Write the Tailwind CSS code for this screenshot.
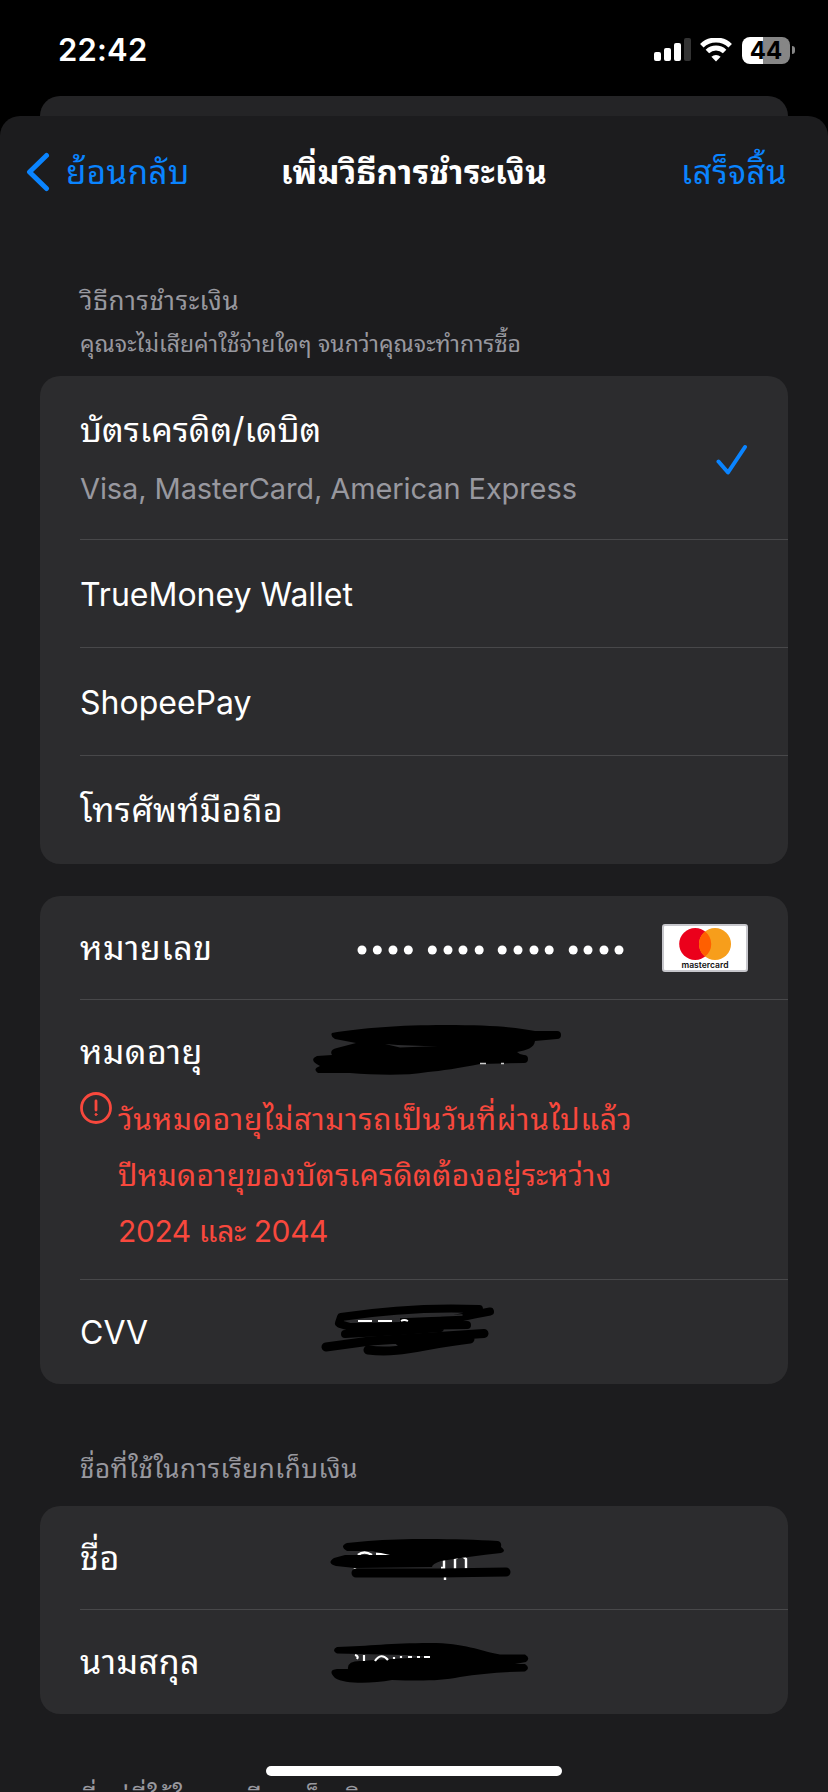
<!DOCTYPE html>
<html lang="th">
<head>
    <meta charset="UTF-8">
    <meta name="viewport" content="width=device-width, initial-scale=1.0">
    <title>เพิ่มวิธีการชำระเงิน</title>
    <script src="https://cdn.jsdelivr.net/npm/@tailwindcss/browser@4"></script>
    <style>
        body {
            font-family: 'Inter', 'Noto Sans Thai Looped', 'Noto Looped Thai', 'Loma', 'Garuda', 'Waree', 'Sarabun', 'Noto Sans Thai', sans-serif;
        }
    </style>
</head>
<body class="bg-black text-white w-[828px] h-[1792px] overflow-hidden relative">

    <!-- Status bar -->
    <header class="h-24 pt-1 pl-[58px] pr-[33px] flex items-center justify-between">
        <span class="text-[31px] font-semibold leading-none tracking-[0.2px] -mt-0.5">22:42</span>
        <div class="flex items-center">
            <svg class="w-[37px] h-6" viewBox="0 0 37 24">
                <rect x="0" y="14" width="7" height="9" rx="2" fill="#fff"/>
                <rect x="10" y="10" width="7" height="13" rx="2" fill="#fff"/>
                <rect x="20" y="5" width="7" height="18" rx="2" fill="#fff"/>
                <rect x="30" y="0" width="7" height="23" rx="2" fill="#333"/>
            </svg>
            <svg class="w-8 h-6 ml-[9px]" viewBox="0 0 32 24" fill="none" stroke="#fff" stroke-width="5">
                <path d="M1.800 8.200a20.500 20.500 0 0 1 28.400 0" transform="translate(0 -.5)"/>
                <path d="M7.400 14a12.400 12.400 0 0 1 17.200 0" transform="translate(0 -.5)"/>
                <path d="M16 23.500l-4.600-4.700a6.600 6.600 0 0 1 9.200 0z" fill="#fff" stroke="none"/>
            </svg>
            <div class="ml-[10px] w-12 h-[27px] rounded-lg bg-linear-to-r from-white from-44% to-[#868686] to-44% text-black text-[24px] font-bold leading-[27px] text-center">44</div>
            <div class="ml-[2px] w-[3px] h-2 rounded-r-full bg-[#868686]"></div>
        </div>
    </header>

    <!-- Sheet behind -->
    <div class="mx-10 h-5 rounded-t-[20px] bg-[#242426]"></div>

    <!-- Main sheet -->
    <main class="h-[1676px] rounded-t-[20px] bg-[#1c1c1e] px-10">
        <nav class="-mx-10 h-[112px] px-[26px] grid grid-cols-[1fr_auto_1fr] items-center text-[33px] leading-none">
            <div class="flex items-center gap-4 text-[#0a84ff]">
                <svg class="w-6 h-10" viewBox="0 0 24 40" fill="none" stroke="currentColor" stroke-width="5" stroke-linecap="round" stroke-linejoin="round">
                    <path d="M20.500 3.500L3.500 20l17 16.500"/>
                </svg>
                <span class="whitespace-nowrap tracking-[0.5px]">ย้อนกลับ</span>
            </div>
            <h1 class="font-bold whitespace-nowrap tracking-[0.4px]">เพิ่มวิธีการชำระเงิน</h1>
            <span class="mr-[15px] text-right text-[#0a84ff] whitespace-nowrap tracking-[0.5px]">เสร็จสิ้น</span>
        </nav>

        <div class="h-[148px] pl-10 pt-[51px] text-[#98989f]">
            <h2 class="text-[26px] leading-[44px] tracking-[0.7px]">วิธีการชำระเงิน</h2>
            <p class="text-[23px] leading-[42px] whitespace-nowrap">คุณจะไม่เสียค่าใช้จ่ายใดๆ จนกว่าคุณจะทำการซื้อ</p>
        </div>

        <!-- Payment types -->
        <section class="h-[488px] rounded-[20px] bg-[#2c2c2e] pl-10 text-[32px] leading-none">
            <div class="h-[164px] border-b border-[#48484a] flex items-center justify-between pr-10">
                <div class="pt-[3px]">
                    <div class="text-[34px] leading-[60px]">บัตรเครดิต/เดบิต</div>
                    <div class="text-[29px] leading-[58px] tracking-[-0.1px] text-[#98989f]">Visa, MasterCard, American Express</div>
                </div>
                <svg class="w-8 h-8 mt-1" viewBox="0 0 32 32" fill="none" stroke="#0a84ff" stroke-width="4" stroke-linecap="round" stroke-linejoin="round">
                    <path d="M2.500 17.500L12 28.500 29 3"/>
                </svg>
            </div>
            <div class="h-[108px] pt-0.5 border-b border-[#48484a] flex items-center">TrueMoney Wallet</div>
            <div class="h-[108px] pt-0.5 border-b border-[#48484a] flex items-center">ShopeePay</div>
            <div class="h-[108px] flex items-center text-[34px] tracking-[0.3px]">โทรศัพท์มือถือ</div>
        </section>

        <!-- Card details -->
        <section class="mt-8 h-[488px] rounded-[20px] bg-[#2c2c2e] pl-10 text-[32px] leading-none">
            <div class="h-[104px] border-b border-[#48484a] flex items-center pr-10">
                <div class="w-[277px] text-[34px] tracking-[0.5px]">หมายเลข</div>
                <svg class="w-[268px] h-3 mt-1" viewBox="357 944 268 12" fill="#fff">
                    <circle cx="362" cy="950" r="4.500"/><circle cx="377.300" cy="950" r="4.500"/><circle cx="393" cy="950" r="4.500"/><circle cx="408.300" cy="950" r="4.500"/>
                    <circle cx="432.300" cy="950" r="4.500"/><circle cx="448" cy="950" r="4.500"/><circle cx="463" cy="950" r="4.500"/><circle cx="479.200" cy="950" r="4.500"/>
                    <circle cx="502.200" cy="950" r="4.500"/><circle cx="518" cy="950" r="4.500"/><circle cx="534" cy="950" r="4.500"/><circle cx="549.200" cy="950" r="4.500"/>
                    <circle cx="573.200" cy="950" r="4.500"/><circle cx="588" cy="950" r="4.500"/><circle cx="604" cy="950" r="4.500"/><circle cx="619" cy="950" r="4.500"/>
                </svg>
                <svg class="w-[86px] h-12 ml-auto" viewBox="0 0 86 48">
                    <rect x="1" y="1" width="84" height="46" rx="2" fill="#fff" stroke="#c7c7cc" stroke-width="2"/>
                    <circle cx="33.200" cy="20" r="16" fill="#eb001b"/>
                    <circle cx="53" cy="20" r="16" fill="#f79e1b"/>
                    <path d="M43.100 7.400a16 16 0 0 1 0 25.200 16 16 0 0 1 0-25.200z" fill="#ff5f00"/>
                    <text x="43" y="44" text-anchor="middle" font-family="Inter" font-size="8.500" font-weight="600" textLength="47" lengthAdjust="spacingAndGlyphs" fill="#111">mastercard</text>
                </svg>
            </div>

            <div class="h-[280px] border-b border-[#48484a]">
                <div class="h-[92px] flex items-start">
                    <div class="w-[230px] pt-[35px] text-[34px] tracking-[0.4px]">หมดอายุ</div>
                    <svg class="w-[256px] h-[56px] mt-[23px]" viewBox="310 1023 256 56">
                        <path d="M332 1033C360 1028 400 1025 445 1025C490 1025 515 1027 535 1031L557 1031A4 4 0 0 1 557 1039L535 1041C534 1048 527 1050 517 1052Q520 1055 524 1055A4 4 0 0 1 524 1063L480 1064C460 1068 440 1071 428 1072C405 1076 375 1075 350 1073L318 1073Q312 1069 320 1066Q308 1060 317 1056L332 1055Q329 1050 337 1048L356 1043L335 1039Q330 1036 332 1033Z" fill="#000"/>
                        <path d="M385 1044Q410 1046 438 1046L400 1047.500Z" fill="#2c2c2e"/>
                        <path d="M480 1063.500h6M501 1063.500h3" stroke="#ccc" stroke-width="1.500"/>
                    </svg>
                </div>
                <div class="flex items-start gap-[6px] text-[#f8483d]">
                    <svg class="w-8 h-8" viewBox="0 0 32 32" fill="none" stroke="currentColor" stroke-width="2.800" stroke-linecap="round">
                        <circle cx="16" cy="16" r="14.500"/>
                        <path d="M16 9v9"/>
                        <circle cx="16" cy="22.500" r="1" fill="currentColor" stroke-width="1"/>
                    </svg>
                    <div class="text-[30px] leading-[56px] whitespace-nowrap -mt-px">
                        <div class="tracking-[0.7px]">วันหมดอายุไม่สามารถเป็นวันที่ผ่านไปแล้ว</div>
                        <div class="tracking-[0.25px]">ปีหมดอายุของบัตรเครดิตต้องอยู่ระหว่าง</div>
                        <div class="tracking-[-0.4px]">2024 และ 2044</div>
                    </div>
                </div>
            </div>

            <div class="h-[104px] flex items-center">
                <div class="w-[240px] pt-0.5">CVV</div>
                <svg class="w-[176px] h-[56px] -mt-2" viewBox="320 1300 176 56" fill="none" stroke="#000" stroke-width="8" stroke-linecap="round" stroke-linejoin="round">
                    <path d="M339 1323L341 1317C380 1311 430 1307 479 1309M490 1311.500C470 1315 450 1320 425 1325M340 1324L350 1327L467 1325M345 1334L400 1331L440 1328"/>
                    <path d="M400 1317C430 1317 455 1316 470 1313L440 1325L405 1330L350 1328L400 1322Z" fill="#000" stroke="none"/>
                    <path d="M326 1347L370 1341L484 1333.500M368 1350C400 1354 420 1345 470 1339L400 1342" stroke-width="9"/>
                    <path d="M358 1321h14M378 1321h14M401 1321q3-2 7 0" stroke="#fff" stroke-width="1.800" stroke-linecap="butt"/>
                    <path d="M388 1318L462 1315" stroke="#2c2c2e" stroke-width="1.500"/>
                </svg>
            </div>
        </section>

        <h2 class="mt-[61px] h-[61px] pl-10 text-[26px] leading-[48px] text-[#98989f] tracking-[0.55px]">ชื่อที่ใช้ในการเรียกเก็บเงิน</h2>

        <!-- Billing name -->
        <section class="h-[208px] rounded-[20px] bg-[#2c2c2e] pl-10 text-[32px] leading-none">
            <div class="h-[104px] border-b border-[#48484a] flex items-center">
                <div class="w-[246px] text-[34px] tracking-[0.7px]">ชื่อ</div>
                <svg class="w-[190px] h-[50px] mt-1" viewBox="326 1534 190 50">
                    <path d="M358 1554q6-5 14 0M355 1567v2M444 1558v9h-3M455 1568v-10q6-6 11 0v10M445 1575v4M376 1553h14" fill="none" stroke="#fff" stroke-width="2.400"/>
                    <path d="M347 1542L368 1540C410 1537 460 1538 498 1540Q502 1541 501 1546Q507 1550 501 1552C480 1554 460 1557 441 1560Q432 1563 432 1566L355 1567L336 1565Q326 1562 334 1557L345 1554H390L372 1550L347 1550Q339 1545 347 1542Z" fill="#000"/>
                    <path d="M356 1572L440 1572L506 1571" fill="none" stroke="#000" stroke-width="9" stroke-linecap="round"/>
                </svg>
            </div>
            <div class="h-[104px] flex items-center">
                <div class="w-[246px] text-[34px] tracking-[0.5px]">นามสกุล</div>
                <svg class="w-[206px] h-[50px] mt-0.5" viewBox="326 1638 206 50">
                    <path d="M337 1647C370 1646 390 1643 430 1643C465 1643 480 1651 500 1654.500L525 1654.500Q531 1658 526 1662L515 1664H525Q531 1668 525 1671.500C500 1672 480 1674 460 1677C440 1681 420 1681 392 1680C370 1684 345 1684 335 1678Q327 1670 337 1669H348Q347 1661 360 1661C380 1660 400 1658 432 1657L405 1655L337 1653.500Q331 1650 337 1647Z" fill="#000"/>
                    <path d="M355 1655q4 1 2 4M364 1655v6M375 1661q6-9 13-1M394 1657v2M401 1656v2M408 1657h4M417 1657h3M424 1657h6" fill="none" stroke="#fff" stroke-width="2.200"/>
                </svg>
            </div>
        </section>

        <h2 class="mt-[60px] h-[18px] pl-10 text-[26px] leading-[48px] text-[#98989f] tracking-[0.55px]">ที่อยู่ที่ใช้ในการเรียกเก็บเงิน</h2>
    </main>

    <!-- Home indicator -->
    <div class="absolute left-[266px] top-[1766px] w-[296px] h-[10px] rounded-full bg-white"></div>

</body>
</html>
